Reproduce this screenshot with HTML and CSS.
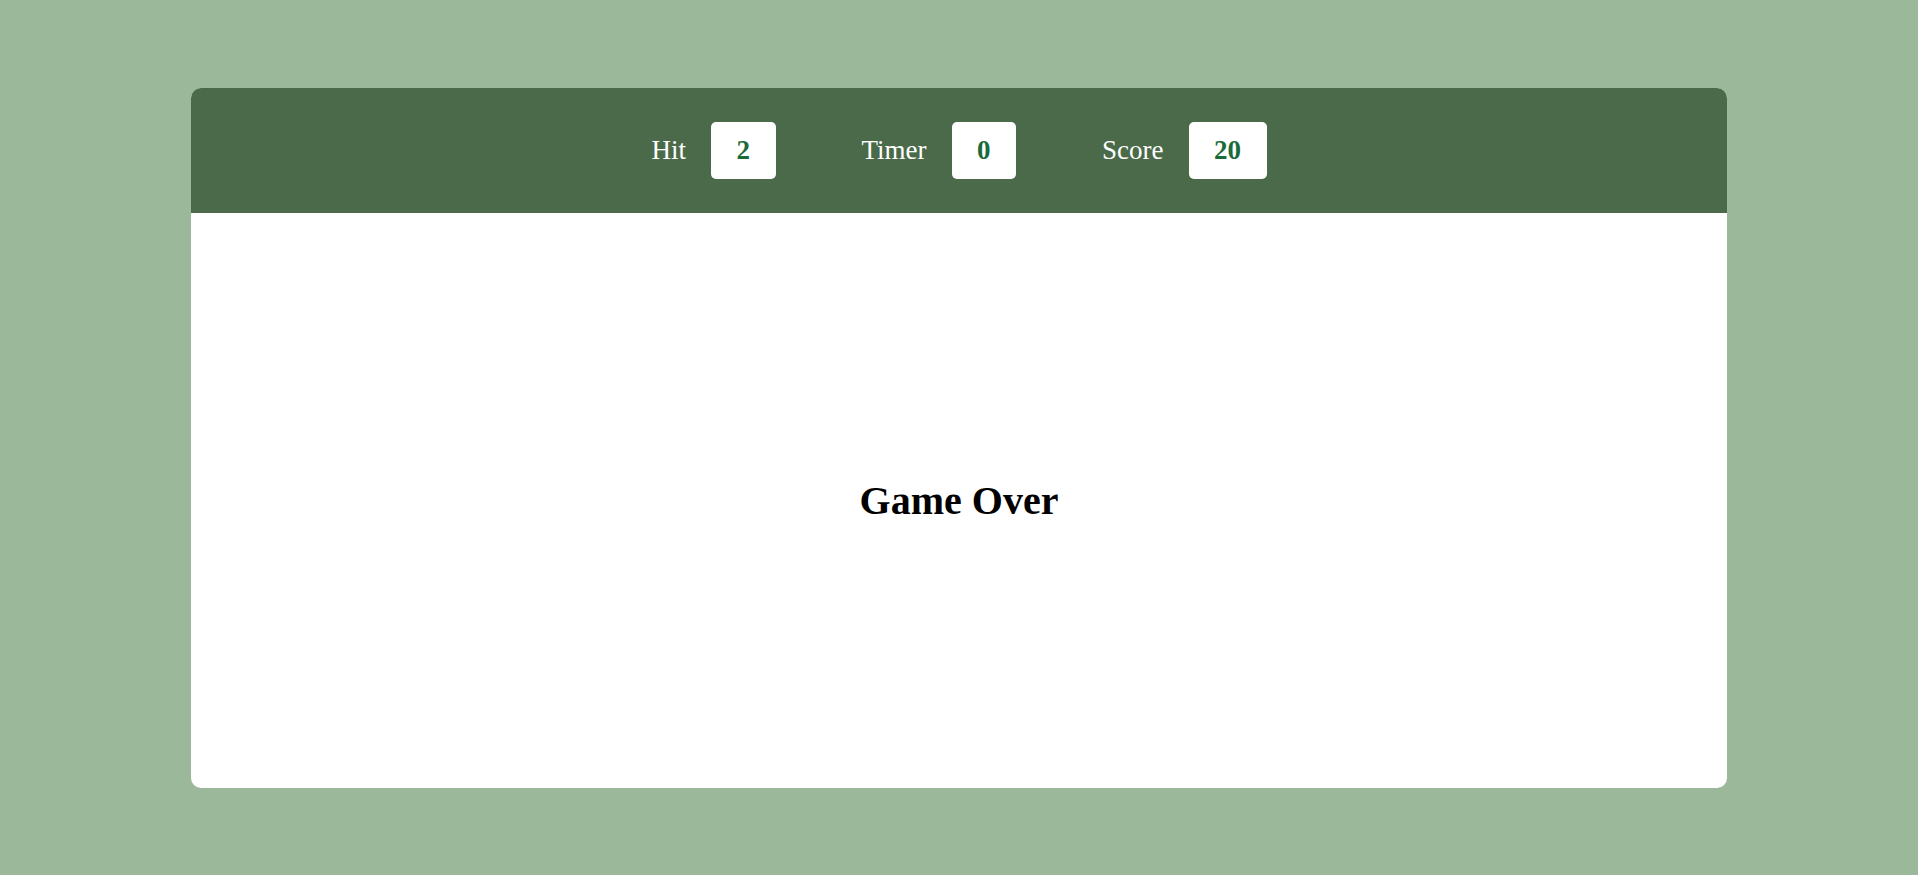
FILE: index.html
```html
<!DOCTYPE html>
<html>
<head>
<meta charset="utf-8">
<title>Bubble Game</title>
<link rel="stylesheet" href="styles.css">
</head>
<body>
<div class="main">
  <div class="panel-top">
    <div class="elem"><span class="label">Hit</span><div class="box">2</div></div>
    <div class="elem"><span class="label">Timer</span><div class="box">0</div></div>
    <div class="elem"><span class="label">Score</span><div class="box">20</div></div>
  </div>
  <div class="panel-bottom">
    <h1 class="over">Game Over</h1>
  </div>
</div>
</body>
</html>
```
FILE: styles.css
```css
html, body {
  margin: 0;
  padding: 0;
  height: 100%;
}
body {
  background: #9bb89b;
  font-family: "Liberation Serif", "Times New Roman", serif;
  display: flex;
  align-items: center;
  justify-content: center;
}
.main {
  width: 1536px;
  height: 80%;
  background: #fff;
  border-radius: 10px;
  overflow: hidden;
  display: flex;
  flex-direction: column;
}
.panel-top {
  height: 125px;
  flex-shrink: 0;
  background: #4a6a4a;
  display: flex;
  align-items: center;
  justify-content: center;
  gap: 86px;
  color: #fff;
}
.elem {
  display: flex;
  align-items: center;
  gap: 25px;
}
.label {
  font-size: 27px;
}
.box {
  background: #fff;
  color: #1b6b3a;
  font-size: 27px;
  font-weight: bold;
  padding: 13px 25.5px;
  border-radius: 5px;
}
.panel-bottom {
  flex: 1;
  display: flex;
  align-items: center;
  justify-content: center;
}
.over {
  margin: 0;
  font-size: 40px;
  font-weight: bold;
  color: #000;
}
```
